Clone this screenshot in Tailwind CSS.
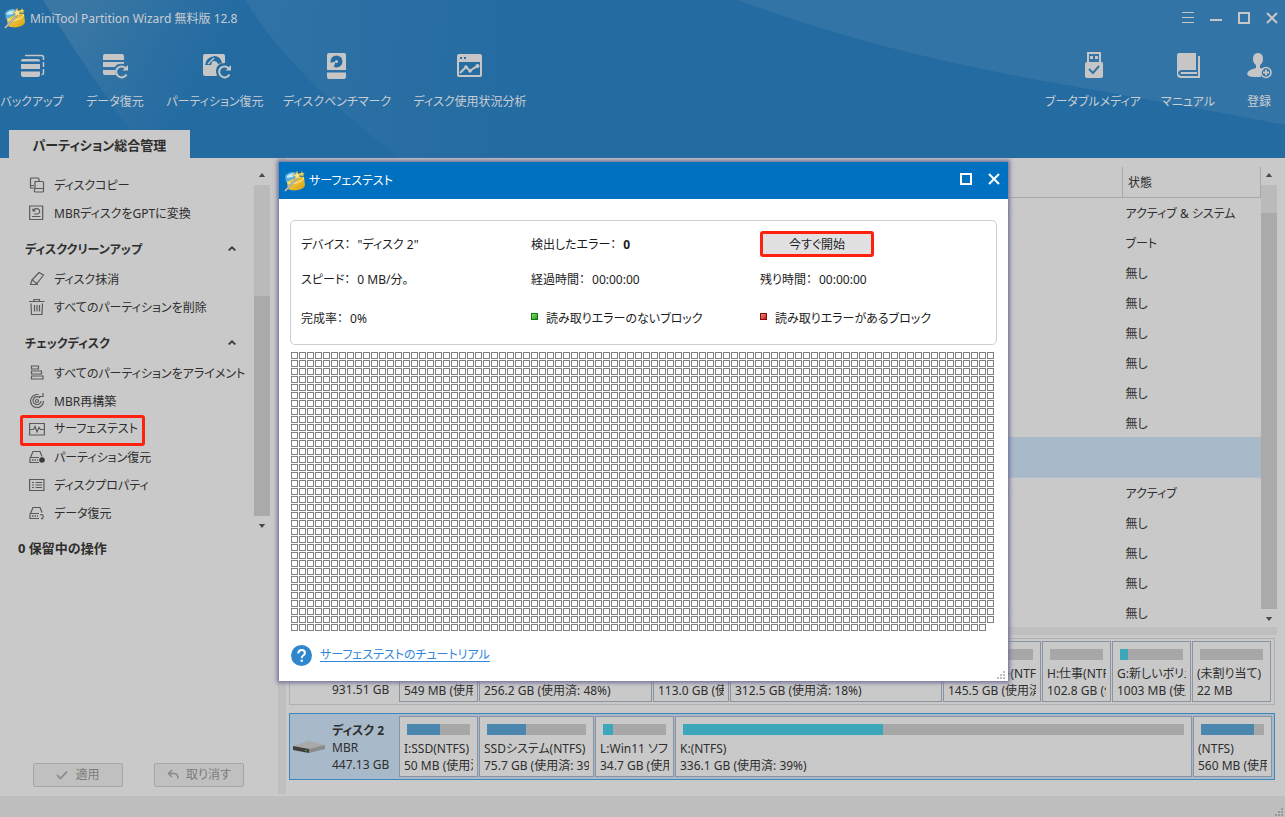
<!DOCTYPE html>
<html lang="ja">
<head>
<meta charset="utf-8">
<title>MiniTool Partition Wizard</title>
<script src="https://cdn.jsdelivr.net/npm/@tailwindcss/browser@4"></script>
</head>
<body class="relative flex min-h-screen flex-col overflow-hidden bg-[#c9c9c9] font-['Noto_Sans','Noto_Sans_CJK_JP',sans-serif] text-[12px] leading-4 whitespace-nowrap text-[#2e2e2e] [font-feature-settings:'palt']">

<svg class="absolute size-0" aria-hidden="true">
  <defs>
    <linearGradient id="gold" x1="0" y1="0" x2="1" y2="1"><stop offset="0" stop-color="#f8e25a"/><stop offset="1" stop-color="#d99a10"/></linearGradient>
  </defs>
  <symbol id="logo" viewBox="0 0 22 22">
    <path d="M1 6C4 2 9 1 13 3L14 8 2 12Z" fill="#55b0e0"/>
    <path d="M3 6C5 4 8 3 11 4L9 7 3 8Z" fill="#c4ebfa"/>
    <path d="M3 12C8 9 16 6 20 7L21 15C20 20 10 22 4 19Z" fill="url(#gold)"/>
    <path d="M3 12C8 15 16 13 20 8" fill="none" stroke="#fff2a0" stroke-width="1"/>
    <path d="M1 21 14 7" stroke="#8a8f96" stroke-width="2"/><path d="M1 21 14 7" stroke="#eef0f2" stroke-width=".8"/>
    <path d="m13 1 1.300 3 3-.5-2 2.500 1.500 3-3.300-1L11 10l.3-3.500L8.500 5l3.200-.8Z" fill="#f9e58a" stroke="#b98a1d" stroke-width=".4"/>
    <path d="m18 1 .7 2 2 .2-1.500 1.400.5 2-1.700-1-1.700 1 .4-2-1.500-1.400 2-.2Z" fill="#f4d24a"/>
  </symbol>
  <symbol id="up" viewBox="0 0 8 5"><path d="M0 5 4 0l4 5Z" fill="#4a4a4a"/></symbol>
  <symbol id="down" viewBox="0 0 8 5"><path d="M0 0h8L4 5Z" fill="#4a4a4a"/></symbol>
  <symbol id="chev" viewBox="0 0 8 5"><path d="M.7 4.500 4 1.300l3.300 3.200" fill="none" stroke="#3c3c46" stroke-width="1.800"/></symbol>
  <symbol id="grip" viewBox="0 0 8 8"><path d="M6 0h2v2H6zM3 3h2v2H3zM6 3h2v2H6zM0 6h2v2H0zM3 6h2v2H3zM6 6h2v2H6z" fill="currentColor"/></symbol>
  <symbol id="drive" viewBox="0 0 16 16"><path d="M1.500 8.500 4 2.500h7l2 5M1 8.500h9M1 8.500v5h9" fill="none" stroke="#5a5a5a" stroke-width="1.200"/><path d="M3 11h1.500M5.500 11H7M8 11h1" stroke="#5a5a5a" stroke-width="1.500"/></symbol>
</svg>

<header class="relative flex h-[158px] shrink-0 flex-col bg-[#236ba1] text-[#c8cdd2]">
  <svg class="absolute inset-0 h-full w-full" viewBox="0 0 1285 158" preserveAspectRatio="none" aria-hidden="true">
    <defs>
      <linearGradient id="s1" gradientUnits="userSpaceOnUse" x1="60" y1="40" x2="190" y2="110"><stop offset="0" stop-color="#3a77a5"/><stop offset="1" stop-color="#236ba1"/></linearGradient>
      <linearGradient id="s2" gradientUnits="userSpaceOnUse" x1="280" y1="0" x2="530" y2="20"><stop offset="0" stop-color="#2f72a5"/><stop offset="1" stop-color="#236ba1"/></linearGradient>
    </defs>
    <path d="M43 0Q80 60 130 130L385 158Q290 80 245 0Z" fill="url(#s1)"/>
    <path d="M245 0Q290 75 400 158H560V0Z" fill="url(#s2)"/>
    <path d="M738 0Q870 50 1044 81T1285 125V0Z" fill="#3274a5"/>
  </svg>
  <div class="relative flex h-9 items-center gap-1 pr-[7px] pl-1">
    <svg class="size-[22px]"><use href="#logo"/></svg>
    <h1 class="flex-1 pt-px">MiniTool Partition Wizard 無料版 12.8</h1>
    <div class="flex items-center gap-4">
      <button aria-label="メニュー"><svg class="h-3 w-3" viewBox="0 0 12 12"><path d="M0 .5h12M0 5.500h12M0 10.500h12" stroke="#c6c6c6"/></svg></button>
      <button aria-label="最小化"><svg class="h-3 w-3" viewBox="0 0 12 12"><path d="M0 8h12" stroke="#c6c6c6" stroke-width="2"/></svg></button>
      <button aria-label="最大化"><svg class="h-3 w-3" viewBox="0 0 12 12"><path d="M1 1h10v10H1z" fill="none" stroke="#c6c6c6" stroke-width="2"/></svg></button>
      <button aria-label="閉じる"><svg class="h-3 w-3" viewBox="0 0 12 12"><path d="m1 1 10 10M11 1 1 11" stroke="#c6c6c6" stroke-width="2"/></svg></button>
    </div>
  </div>
  <nav class="relative flex h-[94px] pt-3 pr-[5px]">
    <button class="flex w-16 flex-col items-center gap-[14px]">
      <svg class="h-8 w-8" viewBox="0 0 32 32" fill="#c6c6c6"><path d="M5 13.500V13q0-2 2-2h15q2 0 2 2v.5zM5 16h19v5H5zM5 23.500h19V27q0 2-2 2H7q-2 0-2-2z"/><path d="M9 7.500h16.500q2 0 2 2V12M27.500 14v5M27.500 21v4.500q0 1-2 1" fill="none" stroke="#c6c6c6" stroke-width="1.500"/></svg>
      <span>バックアップ</span></button>
    <button class="flex w-[102px] flex-col items-center gap-[14px]">
      <svg class="h-8 w-8" viewBox="0 0 32 32" fill="#c6c6c6"><path d="M4 12V8q0-2 2-2h17q2 0 2 2v4zM4 14h21v2q-7-1-9 3H4zM4 22h12q0 3 1 5H6q-2 0-2-2z"/><path d="M27 20.500a5.500 5.500 0 1 0 .5 6" fill="none" stroke="#c6c6c6" stroke-width="2"/><path d="M29 17v5.500h-5.500z"/></svg>
      <span>データ復元</span></button>
    <button class="flex w-[98px] flex-col items-center gap-[14px]">
      <svg class="h-8 w-8" viewBox="0 0 32 32"><path fill="#c6c6c6" fill-rule="evenodd" d="M6 6h18q2 0 2 2v7q-8 0-9 7 0 3 1 6H6q-2 0-2-2V8q0-2 2-2ZM6 17q1-8 10-9 6 1 7 7l-4 1q-1-3-4-3-2 0-3 4Z"/><path d="m9 16 6-6" stroke="#c6c6c6" stroke-width="1.500"/><circle cx="15" cy="16" r="1.800" fill="#c6c6c6"/><path d="M30 20.500a5.500 5.500 0 1 0 .5 6" fill="none" stroke="#c6c6c6" stroke-width="2"/><path d="M32 17v5.500h-5.500z" fill="#c6c6c6"/></svg>
      <span>パーティション復元</span></button>
    <button class="flex w-[146px] flex-col items-center gap-[14px]">
      <svg class="h-8 w-8" viewBox="0 0 32 32"><path fill="#c6c6c6" fill-rule="evenodd" d="M8 5h15q2 0 2 2v15H6V7q0-2 2-2ZM6 24.500h19V29q0 2-2 2H8q-2 0-2-2z"/><circle cx="15.500" cy="13.500" r="6" fill="#236ba1"/><path d="M14.500 13.500 9 15v5h3.500Z" fill="#c6c6c6"/><circle cx="15.500" cy="13.500" r="1.500" fill="#c6c6c6"/></svg>
      <span>ディスクベンチマーク</span></button>
    <button class="flex w-[120px] flex-col items-center gap-[14px]">
      <svg class="h-8 w-8" viewBox="0 0 32 32"><path fill="#c6c6c6" fill-rule="evenodd" d="M5 6h21q2 0 2 2v19q0 2-2 2H5q-2 0-2-2V8q0-2 2-2ZM5 14v13h21V14ZM6 9v2h2V9ZM10 9v2h2V9Z"/><path d="m6 25 6-6 4 4 4-3 4-2" fill="none" stroke="#c6c6c6" stroke-width="2"/><circle cx="12" cy="19" r="1.800" fill="#c6c6c6"/><circle cx="16" cy="23" r="1.800" fill="#c6c6c6"/><circle cx="23.500" cy="18" r="2" fill="#c6c6c6"/></svg>
      <span>ディスク使用状況分析</span></button>
    <button class="ml-auto flex w-[90px] flex-col items-center gap-[14px]">
      <svg class="h-8 w-8" viewBox="0 0 32 32"><path fill="#c6c6c6" fill-rule="evenodd" d="M10 4h14v10h1q1 0 1 2v12q0 2-2 2H10q-2 0-2-2V16q0-2 2-2ZM12 6v8h10V6ZM13 8h3v3h-3ZM18 8h3v3h-3Z"/><path d="m12 21 4 4 6-7" fill="none" stroke="#3274a5" stroke-width="2"/></svg>
      <span>ブータブルメディア</span></button>
    <button class="flex w-[100px] flex-col items-center gap-[14px]">
      <svg class="h-8 w-8" viewBox="0 0 32 32"><path fill="#c6c6c6" fill-rule="evenodd" d="M7 5h17v17H9q-3 1-3 3t3 3h17V8h2v22H9q-4 0-4-4V8q0-3 2-3Z"/><path d="M9 24h16v2H9q-1-1 0-2" fill="#c6c6c6"/></svg>
      <span>マニュアル</span></button>
    <button class="flex w-[42px] flex-col items-center gap-[14px]">
      <svg class="h-8 w-8" viewBox="0 0 32 32" fill="#c6c6c6"><path d="M15 5q5 0 5 6 0 4-3 6v3l4 1q-4 3-3 8H11q-6 0-7-3 1-4 6-5l3-1v-3q-3-2-3-6 0-6 5-6Z"/><circle cx="23" cy="24.500" r="5" fill="none" stroke="#c6c6c6" stroke-width="1.600"/><path d="M23 21.500v6M20 24.500h6" stroke="#c6c6c6" stroke-width="1.800"/></svg>
      <span>登録</span></button>
  </nav>
  <div class="relative mt-auto ml-[9px] flex h-7 w-[181px] items-center justify-center bg-[#c9c9c9] pt-px text-[13px] font-bold text-[#2e2e2e]">パーティション総合管理</div>
</header>

<main class="flex flex-1">
  <aside class="flex w-[278px] shrink-0 flex-col">
    <div class="flex">
      <nav class="flex-1 pt-[13px] pb-[5px] pl-[18px]">
        <a href="#" class="flex h-7 items-center gap-[9px] pl-[11px]"><svg class="size-4" viewBox="0 0 16 16" fill="none" stroke="#5a5a5a" stroke-width="1.200"><path d="M5 11H1.500V8.500M1.500 8.500V2q0-1 1-1H9q1 0 1 1v2M1 8.500h4"/><path d="M6 4.500h7.500q1 0 1 1V14q0 1-1 1H6.500q-1.500 0-1-2L6 11ZM6 11.500h8.500"/></svg><span class="pt-px">ディスクコピー</span></a>
        <a href="#" class="flex h-7 items-center gap-[9px] pl-[11px]"><svg class="size-4" viewBox="0 0 16 16" fill="none" stroke="#5a5a5a" stroke-width="1.200"><path d="M.7 1h13v13.500H.7zM3 11.500h8.500"/><path d="M4 6q3-4 6-1.500 2 3-1.500 4.500H5M4 3.500V6h2.500"/></svg><span class="pt-px">MBRディスクをGPTに変換</span></a>
        <h2 class="flex h-[38px] items-center justify-between pt-2 pr-[18px] pl-[7px] font-bold">ディスククリーンアップ<svg class="mb-1 h-[5px] w-2"><use href="#chev"/></svg></h2>
        <a href="#" class="flex h-7 items-center gap-[9px] pl-[11px]"><svg class="size-4" viewBox="0 0 16 16" fill="none" stroke="#5a5a5a" stroke-width="1.200"><path d="M10 1.500 14.500 4 8 12.500 3 9ZM3 9l-1.500 4.500H6L8 12.500M1 13.500h8"/></svg><span class="pt-px">ディスク抹消</span></a>
        <a href="#" class="flex h-7 items-center gap-[9px] pl-[11px]"><svg class="size-4" viewBox="0 0 16 16" fill="none" stroke="#5a5a5a" stroke-width="1.200"><path d="M0 2.500h15.500M5 2V.5h5.500V2M2 4.500l.5 11h10.500l.5-11M5.500 6v6.500M8 6v6.500M10.500 6v6.500"/></svg><span class="pt-px">すべてのパーティションを削除</span></a>
        <h2 class="flex h-[38px] items-center justify-between pt-2 pr-[18px] pl-[7px] font-bold">チェックディスク<svg class="mb-1 h-[5px] w-2"><use href="#chev"/></svg></h2>
        <a href="#" class="flex h-7 items-center gap-[9px] pl-[11px]"><svg class="size-4" viewBox="0 0 16 16" fill="none" stroke="#5a5a5a" stroke-width="1.200"><path d="M2.500 1h7v3h-7zM2.500 6h10v3h-10zM2.500 11H14v3H2.500z"/></svg><span class="pt-px">すべてのパーティションをアライメント</span></a>
        <a href="#" class="flex h-7 items-center gap-[9px] pl-[11px]"><svg class="size-4" viewBox="0 0 16 16" fill="none" stroke="#5a5a5a" stroke-width="1.200"><path d="M9.500 1.700A6.500 6.500 0 1 0 14.500 8M11 5a4 4 0 1 0 1 3M10 3.500h4V0"/><circle cx="8" cy="8" r="1.500"/></svg><span class="pt-px">MBR再構築</span></a>
        <a href="#" class="mr-[109px] ml-[2px] flex h-[31px] items-center gap-[9px] rounded-[3px] border-3 border-[#ff2010] pb-1 pl-[6px]"><svg class="size-4" viewBox="0 0 16 16" fill="none" stroke="#5a5a5a" stroke-width="1.200"><path d="M.6 2.500h14.800v11.500H.6zM1 8.500h3.500l1.500-3 2 5.500 2-4.500 1.500 2H15"/></svg><span class="pt-px">サーフェステスト</span></a>
        <a href="#" class="-mt-[3px] flex h-7 items-center gap-[9px] pl-[11px]"><svg class="size-4" viewBox="0 0 16 16"><use href="#drive"/><circle cx="13" cy="11" r="2.800" fill="#3c3c3c"/></svg><span class="pt-px">パーティション復元</span></a>
        <a href="#" class="flex h-7 items-center gap-[9px] pl-[11px]"><svg class="size-4" viewBox="0 0 16 16" fill="none" stroke="#5a5a5a" stroke-width="1.200"><path d="M.6 2.500h14.300v11H.6zM3 5.500h2M6.500 5.500H13M3 8h2M6.500 8H13M3 10.500h2M6.500 10.500H13"/></svg><span class="pt-px">ディスクプロパティ</span></a>
        <a href="#" class="flex h-7 items-center gap-[9px] pl-[11px]"><svg class="size-4" viewBox="0 0 16 16"><use href="#drive"/><path d="M11 10a2 2 0 1 1 1 3.500l2 .5" fill="none" stroke="#5a5a5a" stroke-width="1.200"/></svg><span class="pt-px">データ復元</span></a>
      </nav>
      <div class="mr-2 flex w-4 flex-col items-center pt-[15px] pb-1">
        <svg class="h-1 w-2"><use href="#up"/></svg>
        <div class="mt-2 h-[111px] w-full bg-[#bababa]"></div>
        <div class="w-full flex-1 bg-[#aaaaaa]"></div>
        <svg class="mt-2 h-1 w-2"><use href="#down"/></svg>
      </div>
    </div>
    <p class="pt-1 pl-[18px] text-[13px] leading-6 font-bold">0 保留中の操作</p>
    <div class="mt-auto flex gap-[31px] pb-[9px] pl-[33px]">
      <button class="flex h-6 w-[90px] items-center justify-center gap-[7px] rounded-[2px] border border-[#a6a6a6] bg-[#c0c0c0] text-[#7b7b7b]"><svg class="h-3 w-3" viewBox="0 0 12 12"><path d="m1 6 3.500 3.500L11 2.500" fill="none" stroke="#888" stroke-width="1.600"/></svg>適用</button>
      <button class="flex h-6 w-[90px] items-center justify-center gap-[7px] rounded-[2px] border border-[#a6a6a6] bg-[#c0c0c0] text-[#7b7b7b]"><svg class="h-3 w-3" viewBox="0 0 12 12"><path d="M5 1 1.500 4.500 5 8M2 4.500h5q4 0 4 5" fill="none" stroke="#888" stroke-width="1.500"/></svg>取り消す</button>
    </div>
  </aside>
  <div class="mb-[2px] w-2 shrink-0 bg-[#bfbfbf]"></div>

  <section class="flex min-w-0 flex-1 flex-col">
    <div class="flex pt-[9px]">
      <table class="flex-1 table-fixed border-collapse text-left">
        <colgroup><col><col class="w-[138px]"></colgroup>
        <thead><tr class="h-[30px] border-b border-[#a9a9a9]"><th></th><th class="border-x border-[#a9a9a9] pl-[5px] pt-[2px] font-normal">状態</th></tr></thead>
        <tbody class="*:*:pt-[3px]">
          <tr class="h-[30px]"><td class="pr-[113px] text-right">プライマリ</td><td class="pl-[3px]">アクティブ &amp; システム</td></tr>
          <tr class="h-[30px]"><td class="pr-[113px] text-right">プライマリ</td><td class="pl-[3px]">ブート</td></tr>
          <tr class="h-[30px]"><td class="pr-[113px] text-right">プライマリ</td><td class="pl-[3px]">無し</td></tr>
          <tr class="h-[30px]"><td></td><td class="pl-[3px]">無し</td></tr>
          <tr class="h-[30px]"><td></td><td class="pl-[3px]">無し</td></tr>
          <tr class="h-[30px]"><td></td><td class="pl-[3px]">無し</td></tr>
          <tr class="h-[30px]"><td></td><td class="pl-[3px]">無し</td></tr>
          <tr class="h-[30px]"><td></td><td class="pl-[3px]">無し</td></tr>
          <tr class="h-10 border-b border-[#b0bfcd] bg-[#a8b9c9]"><td></td><td></td></tr>
          <tr class="h-[30px]"><td class="pr-[113px] text-right">プライマリ</td><td class="pl-[3px]">アクティブ</td></tr>
          <tr class="h-[30px]"><td class="pr-[113px] text-right">プライマリ</td><td class="pl-[3px]">無し</td></tr>
          <tr class="h-[30px]"><td></td><td class="pl-[3px]">無し</td></tr>
          <tr class="h-[30px]"><td></td><td class="pl-[3px]">無し</td></tr>
          <tr class="h-[30px]"><td class="pr-[113px] text-right">プライマリ</td><td class="pl-[3px]">無し</td></tr>
        </tbody>
      </table>
      <div class="mr-2 flex w-4 flex-col items-center pt-[6px] pb-[6px]">
        <svg class="h-1 w-2"><use href="#up"/></svg>
        <div class="mt-2 h-7 w-full bg-[#bababa]"></div>
        <div class="w-full flex-1 bg-[#aaaaaa]"></div>
        <svg class="mt-2 h-1 w-2"><use href="#down"/></svg>
      </div>
    </div>
    <div class="mr-2 h-2 bg-[#bfbfbf]"></div>

    <div class="flex flex-col gap-2 pt-[3px] pr-[10px] pb-4 pl-[3px]">
      <div class="flex border border-[#adb0b5] py-[2px] pr-[3px]">
        <div class="flex w-[109px] flex-col justify-end pb-1 pl-[42px]">931.51 GB</div>
        <div class="grid h-[61px] flex-1 grid-cols-[79fr_173fr_76fr_212fr_98fr_69fr_79fr_79fr] gap-px *:min-w-0 *:border *:border-[#8a93a2] *:px-1 *:pt-[7px]">
          <div><div class="mx-[3px] h-[11px] bg-[#a7a7a7]"></div><p class="mt-[22px] overflow-hidden leading-[17px]">549 MB (使用済</p></div>
          <div><div class="mx-[3px] h-[11px] bg-[#a7a7a7]"></div><p class="mt-[22px] overflow-hidden leading-[17px]">256.2 GB (使用済: 48%)</p></div>
          <div><div class="mx-[3px] h-[11px] bg-[#a7a7a7]"></div><p class="mt-[22px] overflow-hidden leading-[17px]">113.0 GB (使用済</p></div>
          <div><div class="mx-[3px] h-[11px] bg-[#a7a7a7]"></div><p class="mt-[22px] overflow-hidden leading-[17px]">312.5 GB (使用済: 18%)</p></div>
          <div><div class="mx-[3px] h-[11px] bg-[#a7a7a7]"></div><p class="mt-[5px] overflow-hidden leading-[17px]">F:アカウント(NTFS)<br>145.5 GB (使用済</p></div>
          <div><div class="mx-[3px] h-[11px] bg-[#a7a7a7]"></div><p class="mt-[5px] overflow-hidden leading-[17px]">H:仕事(NTFS)<br>102.8 GB (使用済</p></div>
          <div><div class="mx-[3px] h-[11px] bg-[#a7a7a7]"><div class="h-full w-2 bg-[#3ca6bb]"></div></div><p class="mt-[5px] overflow-hidden leading-[17px]">G:新しいボリューム<br>1003 MB (使用済</p></div>
          <div><div class="mx-[3px] h-[11px] bg-[#a7a7a7]"></div><p class="mt-[5px] overflow-hidden leading-[17px]">(未割り当て)<br>22 MB</p></div>
        </div>
      </div>
      <div class="flex border border-[#3f88bd] bg-[#a8b9c9] py-[2px] pr-[2px]">
        <div class="flex w-[109px] items-center gap-[7px] pl-[3px]">
          <svg class="h-3 w-8 shrink-0" viewBox="0 0 32 12"><path d="M0 5 16 0l16 4-16 4Z" fill="#a9a9a9"/><path d="m0 5 16 3v4L0 9Z" fill="#3f3f3f"/><path d="m16 8 16-4v4l-16 4Z" fill="#8b8b8b"/><path d="M12 9h2v1h-2z" fill="#35a34a"/></svg>
          <div class="pt-px leading-[17px]"><p class="font-bold">ディスク 2</p><p>MBR</p><p>447.13 GB</p></div>
        </div>
        <div class="grid h-[61px] flex-1 grid-cols-[79fr_115fr_79fr_517fr_79fr] gap-px *:min-w-0 *:border *:border-[#8a93a2] *:bg-[#c9c9c9] *:px-1 *:pt-[7px]">
          <div><div class="mx-[3px] h-[11px] bg-[#a7a7a7]"><div class="h-full w-[33px] bg-[#4a86ad]"></div></div><p class="mt-[5px] overflow-hidden leading-[17px]">I:SSD(NTFS)<br>50 MB (使用済</p></div>
          <div><div class="mx-[3px] h-[11px] bg-[#a7a7a7]"><div class="h-full w-[39px] bg-[#4a86ad]"></div></div><p class="mt-[5px] overflow-hidden leading-[17px]">SSDシステム(NTFS)<br>75.7 GB (使用済: 39%)</p></div>
          <div><div class="mx-[3px] h-[11px] bg-[#a7a7a7]"><div class="h-full w-[10px] bg-[#3ca6bb]"></div></div><p class="mt-[5px] overflow-hidden leading-[17px]">L:Win11 ソフト<br>34.7 GB (使用済</p></div>
          <div><div class="mx-[3px] h-[11px] bg-[#a7a7a7]"><div class="h-full w-2/5 bg-[#3ca6bb]"></div></div><p class="mt-[5px] overflow-hidden leading-[17px]">K:(NTFS)<br>336.1 GB (使用済: 39%)</p></div>
          <div><div class="mx-[3px] h-[11px] bg-[#a7a7a7]"><div class="h-full w-[53px] bg-[#4a86ad]"></div></div><p class="mt-[5px] overflow-hidden leading-[17px]">(NTFS)<br>560 MB (使用済</p></div>
        </div>
      </div>
    </div>
  </section>
</main>
<footer class="flex h-[22px] shrink-0 items-end justify-end bg-[#bebebe] pr-[2px] pb-[2px] text-[#999]"><svg class="size-2"><use href="#grip"/></svg></footer>

<div role="dialog" aria-labelledby="dlg" class="absolute top-[162px] left-[279px] w-[729px] bg-white text-[#1c1c1c] shadow-[0_0_4px_2px_#74749a]">
  <div class="flex h-[37px] items-center gap-[3px] bg-[#0070c1] pr-2 pl-[5px] text-white">
    <svg class="size-[22px]"><use href="#logo"/></svg>
    <h2 id="dlg" class="flex-1">サーフェステスト</h2>
    <div class="flex items-center gap-4 pb-[3px]">
      <button aria-label="最大化"><svg class="size-3" viewBox="0 0 12 12"><path d="M1 1h10v10H1z" fill="none" stroke="#fff" stroke-width="2"/></svg></button>
      <button aria-label="閉じる"><svg class="size-3" viewBox="0 0 12 12"><path d="m1 1 10 10M11 1 1 11" stroke="#fff" stroke-width="2"/></svg></button>
    </div>
  </div>
  <div class="px-[11px] pt-[21px] pb-[15px]">
    <div class="grid grid-cols-[230fr_229fr_236fr] grid-rows-[26px_34px_34px] items-center gap-y-[5px] rounded-[5px] border border-[#cdcdcd] pt-[10px] pb-[9px] pl-[10px]">
      <p class="flex gap-[7px] pt-[2px]"><span>デバイス：</span><span>"ディスク 2"</span></p>
      <p class="flex gap-[7px] pt-[2px]"><span>検出したエラー：</span><b>0</b></p>
      <button class="h-[26px] w-[114px] rounded-[3px] border-3 border-[#ff2010] bg-[#e1e1e1] pt-[2px]">今すぐ開始</button>
      <p class="flex gap-[7px] pt-[2px]"><span>スピード：</span><span>0 MB/分。</span></p>
      <p class="flex gap-[7px] pt-[2px]"><span>経過時間：</span><span>00:00:00</span></p>
      <p class="flex gap-[7px] pt-[2px]"><span>残り時間：</span><span>00:00:00</span></p>
      <p class="flex gap-[7px] pt-[2px]"><span>完成率：</span><span>0%</span></p>
      <p class="flex gap-2"><i class="mt-[3px] size-[7px] border border-[#0b7a0b] bg-linear-to-br from-[#8be07a] to-[#0f9a10]"></i><span class="pt-px">読み取りエラーのないブロック</span></p>
      <p class="flex gap-2"><i class="mt-[3px] size-[7px] border border-[#8a0b0b] bg-linear-to-br from-[#f08a80] to-[#c00808]"></i><span class="pt-px">読み取りエラーがあるブロック</span></p>
    </div>
    <svg class="mt-[7px] ml-px block h-[279px] w-[703px]" viewBox="0 0 703 279" shape-rendering="crispEdges" aria-label="ブロック">
      <defs><pattern id="cells" width="8" height="8" patternUnits="userSpaceOnUse"><path d="M0 0h7v7H0zM1 1v5h5V1z" fill="#808080" fill-rule="evenodd"/></pattern></defs>
      <path d="M0 0h703v271h-8v8H0z" fill="url(#cells)"/>
    </svg>
    <div class="mt-[13px] ml-px flex h-[22px] items-center gap-2">
      <svg class="size-[21px]" viewBox="0 0 21 21"><circle cx="10.500" cy="10.500" r="10.500" fill="#2f86cc"/><path d="M7.300 8.500q0-3.500 3.300-3.500t3.300 3q0 1.500-1.700 2.500-1.500 1-1.500 2.500" fill="none" stroke="#fff" stroke-width="2"/><path d="M9.600 14.600h2.200v2.200H9.600z" fill="#fff"/></svg>
      <a href="#" class="text-[#2f86dd] underline underline-offset-2">サーフェステストのチュートリアル</a>
    </div>
  </div>
  <svg class="absolute right-[3px] bottom-[2px] size-2 text-[#bdbdbd]"><use href="#grip"/></svg>
</div>
</body>
</html>
